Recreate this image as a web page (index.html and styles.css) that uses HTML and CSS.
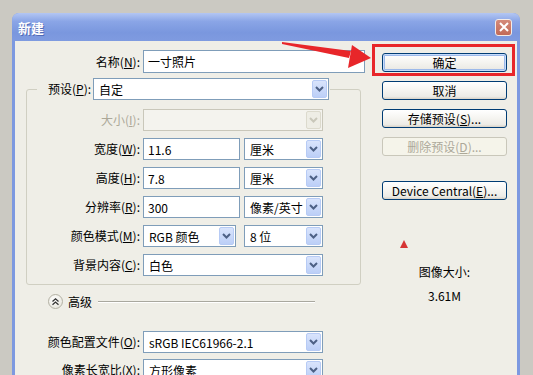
FILE: index.html
```html
<!DOCTYPE html>
<html lang="zh-CN">
  <head>
    <meta charset="UTF-8" />
    <title>新建</title>
    <link rel="stylesheet" href="styles.css">
  </head>
  <body>
    <div class="window">
      <div class="titlebar">
        <span class="title">新建</span>
        <span class="close">
          <svg width="10" height="10" viewBox="0 0 10 10"><path d="M1 1L9 9M9 1L1 9" stroke="#fff" stroke-width="2"/></svg>
        </span>
      </div>

      <div class="dialog">
        <div class="form">
          <div class="row">
            <span class="lbl">名称(<u>N</u>):</span>
            <div class="field name-field">一寸照片</div>
          </div>

          <fieldset class="preset">
            <legend class="preset-legend">
              <div class="legend-inner">
                <span class="lbl">预设(<u>P</u>):</span>
                <div class="combo combo-preset">
                  <span class="combo-text">自定</span>
                  <span class="drop"><svg width="9" height="6" viewBox="0 0 9 6"><path d="M1 1L4.5 4.5L8 1" fill="none" stroke="#4d6185" stroke-width="2"/></svg></span>
                </div>
              </div>
            </legend>

            <div class="grid">
              <span class="lbl disabled">大小(<u>I</u>):</span>
              <div class="cell">
                <div class="combo combo-full is-disabled">
                  <span class="combo-text"></span>
                  <span class="drop"><svg width="9" height="6" viewBox="0 0 9 6"><path d="M1 1L4.5 4.5L8 1" fill="none" stroke="#c9c7ba" stroke-width="2"/></svg></span>
                </div>
              </div>

              <span class="lbl">宽度(<u>W</u>):</span>
              <div class="cell">
                <div class="field num-field">11.6</div>
                <div class="combo unit">
                  <span class="combo-text">厘米</span>
                  <span class="drop"><svg width="9" height="6" viewBox="0 0 9 6"><path d="M1 1L4.5 4.5L8 1" fill="none" stroke="#4d6185" stroke-width="2"/></svg></span>
                </div>
              </div>

              <span class="lbl">高度(<u>H</u>):</span>
              <div class="cell">
                <div class="field num-field">7.8</div>
                <div class="combo unit">
                  <span class="combo-text">厘米</span>
                  <span class="drop"><svg width="9" height="6" viewBox="0 0 9 6"><path d="M1 1L4.5 4.5L8 1" fill="none" stroke="#4d6185" stroke-width="2"/></svg></span>
                </div>
              </div>

              <span class="lbl">分辨率(<u>R</u>):</span>
              <div class="cell">
                <div class="field num-field">300</div>
                <div class="combo unit">
                  <span class="combo-text">像素/英寸</span>
                  <span class="drop"><svg width="9" height="6" viewBox="0 0 9 6"><path d="M1 1L4.5 4.5L8 1" fill="none" stroke="#4d6185" stroke-width="2"/></svg></span>
                </div>
              </div>

              <span class="lbl">颜色模式(<u>M</u>):</span>
              <div class="cell">
                <div class="combo combo-mode">
                  <span class="combo-text">RGB 颜色</span>
                  <span class="drop"><svg width="9" height="6" viewBox="0 0 9 6"><path d="M1 1L4.5 4.5L8 1" fill="none" stroke="#4d6185" stroke-width="2"/></svg></span>
                </div>
                <div class="combo unit">
                  <span class="combo-text">8 位</span>
                  <span class="drop"><svg width="9" height="6" viewBox="0 0 9 6"><path d="M1 1L4.5 4.5L8 1" fill="none" stroke="#4d6185" stroke-width="2"/></svg></span>
                </div>
              </div>

              <span class="lbl">背景内容(<u>C</u>):</span>
              <div class="cell">
                <div class="combo combo-full">
                  <span class="combo-text">白色</span>
                  <span class="drop"><svg width="9" height="6" viewBox="0 0 9 6"><path d="M1 1L4.5 4.5L8 1" fill="none" stroke="#4d6185" stroke-width="2"/></svg></span>
                </div>
              </div>
            </div>
          </fieldset>

          <div class="advanced">
            <span class="toggle">
              <svg width="9" height="9" viewBox="0 0 9 9"><path d="M1.5 4.5L4.5 1.8L7.5 4.5M1.5 7.8L4.5 5.1L7.5 7.8" fill="none" stroke="#333" stroke-width="1.3"/></svg>
            </span>
            <span class="advanced-text">高级</span>
            <span class="advanced-line"></span>
          </div>

          <div class="row row-profile">
            <span class="lbl">颜色配置文件(<u>O</u>):</span>
            <div class="combo combo-full">
              <span class="combo-text">sRGB IEC61966-2.1</span>
              <span class="drop"><svg width="9" height="6" viewBox="0 0 9 6"><path d="M1 1L4.5 4.5L8 1" fill="none" stroke="#4d6185" stroke-width="2"/></svg></span>
            </div>
          </div>

          <div class="row row-aspect">
            <span class="lbl">像素长宽比(<u>X</u>):</span>
            <div class="combo combo-full">
              <span class="combo-text">方形像素</span>
              <span class="drop"><svg width="9" height="6" viewBox="0 0 9 6"><path d="M1 1L4.5 4.5L8 1" fill="none" stroke="#4d6185" stroke-width="2"/></svg></span>
            </div>
          </div>
        </div>

        <div class="actions">
          <button class="btn btn-default">确定</button>
          <button class="btn">取消</button>
          <button class="btn">存储预设(<u>S</u>)...</button>
          <button class="btn" disabled>删除预设(<u>D</u>)...</button>
          <button class="btn btn-device">Device Central(<u>E</u>)...</button>
          <span class="warn"></span>
          <div class="size-label">图像大小:</div>
          <div class="size-value">3.61M</div>
        </div>
      </div>
    </div>

    <!-- annotation drawn over the screenshot -->
    <div class="highlight"></div>
    <svg class="arrow" width="533" height="375" viewBox="0 0 533 375">
      <polygon points="282,42 351,51 349,58 282,44" fill="#e8262a"/>
      <polygon points="371,58 352,45 348,68" fill="#e8262a"/>
    </svg>
  </body>
</html>
```

FILE: styles.css
```css
html,
body {
  height: 375px;
  overflow: hidden;
}
body {
  margin: 0;
  position: relative;
  background: #cbc9c2;
  font-family: "Noto Sans CJK SC", "Noto Sans", sans-serif;
  font-size: 12px;
  color: #000;
}
u {
  text-decoration: underline;
  text-underline-offset: 1px;
}
.window {
  margin: 13px 0 0 12px;
  width: 508px;
  box-sizing: border-box;
  padding: 0 3px;
  background: #7d99e0;
  border-radius: 7px 7px 0 0;
}
.titlebar {
  height: 28px;
  display: flex;
  align-items: center;
  justify-content: space-between;
  padding: 0 5px 0 3px;
  background: linear-gradient(#b3c6f3, #8aa5e6 30%, #7a97de 70%, #7f9be0);
  border-radius: 7px 7px 0 0;
  margin: 0 -3px;
  padding-left: 6px;
  padding-right: 8px;
}
.title {
  color: #fff;
  font-size: 13px;
  font-weight: bold;
  text-shadow: 1px 1px 0 rgba(40, 60, 140, 0.5);
}
.close {
  width: 17px;
  height: 17px;
  box-sizing: border-box;
  display: flex;
  align-items: center;
  justify-content: center;
  border: 1px solid #f4ece8;
  border-radius: 3px;
  background: linear-gradient(#d48a7a, #c26a58);
}
.dialog {
  display: flex;
  height: 340px;
  padding-top: 9px;
  box-sizing: border-box;
  background: #efeee7;
}
.form {
  width: 355px;
  flex-shrink: 0;
}
.row {
  display: grid;
  grid-template-columns: 125px 222px;
  column-gap: 3px;
  align-items: center;
  height: 23px;
}
.lbl {
  text-align: right;
  white-space: nowrap;
  line-height: 16px;
}
.lbl.disabled {
  color: #aca899;
}
.field {
  height: 100%;
  box-sizing: border-box;
  border: 1px solid #7f9db9;
  background: #fff;
  padding-left: 4px;
  display: flex;
  align-items: center;
}
.name-field {
  height: 23px;
}
.preset {
  margin: 5px 0 0 11px;
  width: 335px;
  box-sizing: border-box;
  padding: 9px 0 8px 0;
  border: 1px solid #d0cfc2;
  border-radius: 3px;
}
.preset-legend {
  margin-left: 10px;
  padding: 0 1px 0 11px;
}
.legend-inner {
  display: flex;
  align-items: center;
  gap: 2px;
}
.combo {
  height: 22px;
  box-sizing: border-box;
  border: 1px solid #7f9db9;
  background: #fff;
  display: flex;
  align-items: center;
  justify-content: space-between;
  padding: 1px;
}
.combo-text {
  padding-left: 4px;
  white-space: nowrap;
}
.drop {
  width: 15px;
  height: 18px;
  box-sizing: border-box;
  border: 1px solid #b7cbf5;
  border-radius: 2px;
  background: linear-gradient(#d9e4fc, #bccff7);
  display: flex;
  align-items: center;
  justify-content: center;
}
.combo-preset {
  width: 236px;
}
.grid {
  display: grid;
  grid-template-columns: 113px 180px;
  column-gap: 3px;
  row-gap: 7px;
  grid-auto-rows: 22px;
  align-items: center;
}
.cell {
  display: flex;
  height: 22px;
}
.combo-full {
  width: 180px;
}
.num-field {
  width: 97px;
}
.combo-mode {
  width: 93px;
}
.unit {
  width: 79px;
  margin-left: auto;
}
.is-disabled {
  border-color: #c9c7ba;
  background: #f4f3ee;
}
.is-disabled .drop {
  border-color: #dcdacd;
  background: #eeede5;
}
.advanced {
  display: flex;
  align-items: center;
  margin: 9px 0 0 33px;
  width: 267px;
  height: 15px;
}
.toggle {
  width: 15px;
  height: 15px;
  box-sizing: border-box;
  border: 1px solid #b3b1a4;
  border-radius: 50%;
  background: radial-gradient(circle at 40% 35%, #fff, #e3e1d6);
  display: flex;
  align-items: center;
  justify-content: center;
}
.advanced-text {
  margin-left: 5px;
}
.advanced-line {
  flex: 1;
  margin-left: 6px;
  border-top: 1px solid #a9a89f;
  border-bottom: 1px solid #fff;
}
.row-profile {
  margin-top: 22px;
  height: 22px;
}
.row-aspect {
  margin-top: 6px;
  height: 22px;
}
.actions {
  width: 125px;
  margin: 3px 0 0 12px;
  display: flex;
  flex-direction: column;
  gap: 9px;
}
.btn {
  height: 19px;
  padding: 0;
  border: 1px solid #003c74;
  border-radius: 3px;
  background: linear-gradient(#ffffff, #f5f4f0 50%, #ecebe6 85%, #d8d2c7);
  font-family: inherit;
  font-size: 12px;
  color: #000;
  line-height: 16px;
}
.btn-default {
  box-shadow: inset 0 0 0 1px #c6dcfb, inset 0 0 0 2px #9cb9ea;
}
.btn:disabled {
  border-color: #c9c7ba;
  background: #f5f4ea;
  color: #aca899;
}
.btn-device {
  margin-top: 16px;
}
.warn {
  width: 0;
  height: 0;
  margin: 31px 0 0 18px;
  border-left: 4.5px solid transparent;
  border-right: 4.5px solid transparent;
  border-bottom: 8px solid #d63434;
}
.size-label,
.size-value {
  text-align: center;
  line-height: 16px;
}
.size-label {
  margin-top: 7px;
}
.size-value {
  margin-top: -1px;
}
.highlight {
  position: absolute;
  left: 372px;
  top: 44px;
  width: 143px;
  height: 32px;
  box-sizing: border-box;
  border: 3px solid #e8262a;
}
.arrow {
  position: absolute;
  left: 0;
  top: 0;
  pointer-events: none;
}
```
